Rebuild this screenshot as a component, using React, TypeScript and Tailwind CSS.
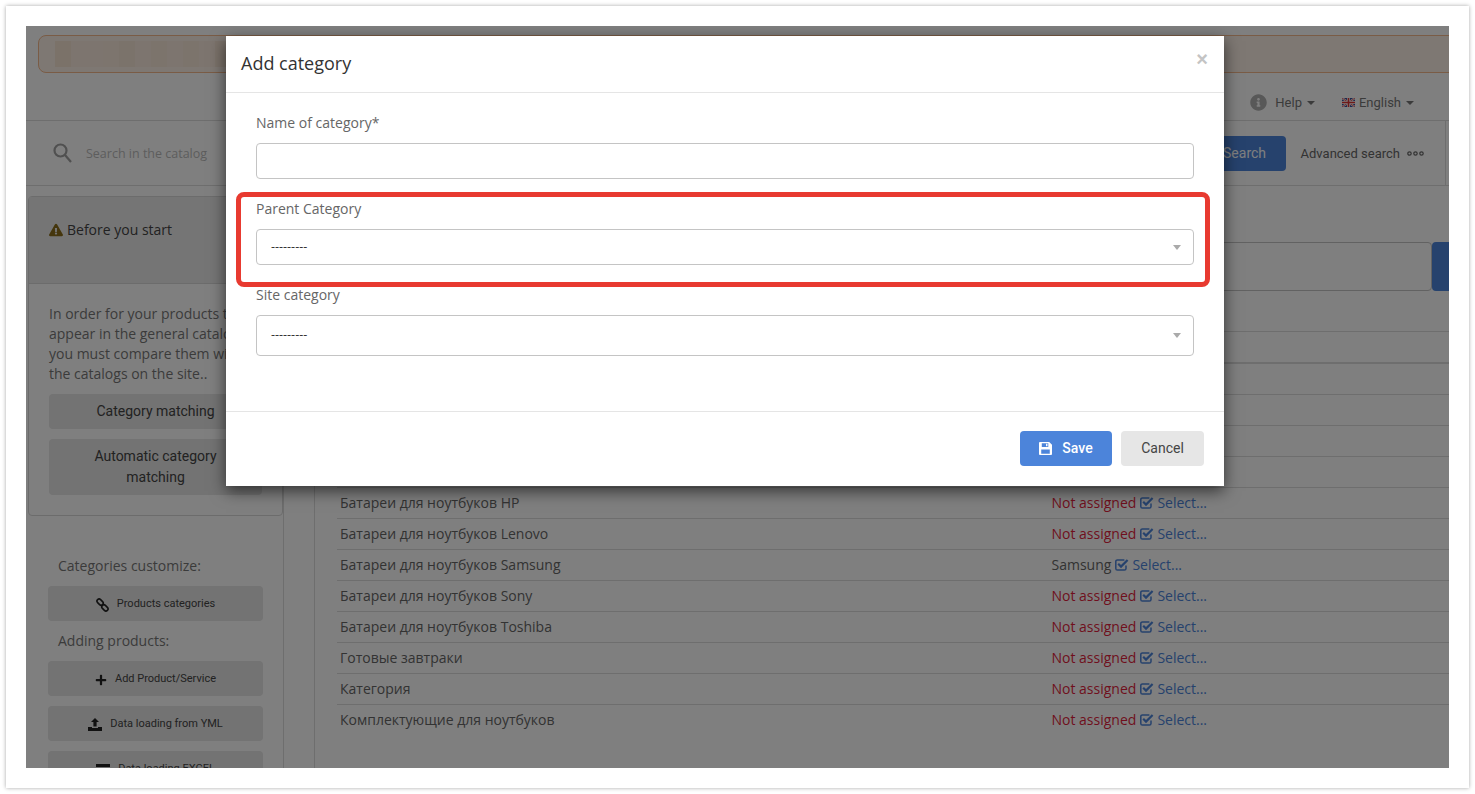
import React from "react";
import { FaExclamationTriangle, FaInfoCircle, FaPlus } from "react-icons/fa";

const rows: [string, string][] = [
  ["Батареи для ноутбуков HP", "Not assigned"],
  ["Батареи для ноутбуков Lenovo", "Not assigned"],
  ["Батареи для ноутбуков Samsung", "Samsung"],
  ["Батареи для ноутбуков Sony", "Not assigned"],
  ["Батареи для ноутбуков Toshiba", "Not assigned"],
  ["Готовые завтраки", "Not assigned"],
  ["Категория", "Not assigned"],
  ["Комплектующие для ноутбуков", "Not assigned"],
];

const blocks = ["#f6e4d2", "#fbebdf", "#fbebdf", "#faeadc", "#f7e6d6", "#fbebdf", "#f8e8d8", "#fbebdf", "#f8e8d8", "#fbebdf", "#f6e5d4"];

function Caret({ className }: { className: string }) {
  return <span className={"inline-block border-x-[4px] border-t-[4px] border-x-transparent " + className} />;
}

function SelectBox({ h, lift = "" }: { h: string; lift?: string }) {
  return (
    <div className={"flex items-center justify-between rounded-[4px] border border-[#c4c4c4] bg-white pl-[14px] pr-[12px] text-[12.5px] text-[#333] " + h}>
      <span className={lift}>---------</span>
      <span className="inline-block border-x-[4.5px] border-t-[5px] border-x-transparent border-t-[#aaa]" />
    </div>
  );
}

function SearchIcon() {
  return (
    <svg width="19" height="20" viewBox="0 0 19 20" className="shrink-0 text-[#a0a0a0]" fill="none" stroke="currentColor" strokeWidth="2.2">
      <circle cx="7.5" cy="7.5" r="6" />
      <path d="M12 12l6 7" />
    </svg>
  );
}

function UploadIcon() {
  return (
    <svg width="14" height="13" viewBox="0 0 14 13" className="shrink-0 text-[#222]" fill="currentColor">
      <path d="M7 0l4 4H8.6v4.4H5.4V4H3z" />
      <path d="M0 9h4v1h6V9h4v4H0z" />
    </svg>
  );
}

function ListIcon() {
  return (
    <svg width="14" height="12" viewBox="0 0 14 12" className="shrink-0 text-[#222]" fill="currentColor">
      <path d="M0 0h14v3H0zM0 4.5h14v1.5H0zM0 8h14v1.5H0z" />
    </svg>
  );
}

function ChainIcon() {
  return (
    <svg width="13" height="14" viewBox="0 0 13 14" className="shrink-0 text-[#222]" fill="none" stroke="currentColor" strokeWidth="1.6">
      <rect x="0.6" y="2" width="7" height="4.2" rx="2.1" transform="rotate(45 4.1 4.1)" />
      <rect x="5.4" y="7.8" width="7" height="4.2" rx="2.1" transform="rotate(45 8.9 9.9)" />
    </svg>
  );
}

function CheckIcon() {
  return (
    <svg width="14" height="13" viewBox="0 0 14 13" className="shrink-0 text-[#4c84da]" fill="none" stroke="currentColor">
      <path d="M11 7.5v3a1.6 1.6 0 0 1-1.6 1.6H2.4A1.6 1.6 0 0 1 .8 10.5V3.5a1.6 1.6 0 0 1 1.6-1.6h7" strokeWidth="1.5" />
      <path d="M3.2 5.8l2.8 2.8 6.6-6.6" strokeWidth="2.2" />
    </svg>
  );
}

function SaveIcon() {
  return (
    <svg width="13" height="13" viewBox="0 0 14 14" className="shrink-0" fill="#fff">
      <path
        fillRule="evenodd"
        d="M1 0h10l3 3v10a1 1 0 0 1-1 1H1a1 1 0 0 1-1-1V1a1 1 0 0 1 1-1zM3 1.3v4h7v-4zM2.4 8v4.7h9.2V8z"
      />
      <path d="M7.6 1.9h1.5v2.8H7.6z" />
    </svg>
  );
}

function SideButton({ icon, label }: { icon: React.ReactNode; label: string }) {
  return (
    <div className="mt-[10px] ml-[22px] flex h-[35px] w-[215px] shrink-0 items-center justify-center gap-[8px] rounded-[4px] bg-[#e6e6e6] pt-[2px] font-['Roboto',sans-serif] text-[11px] text-[#444]">
      {icon}
      <span>{label}</span>
    </div>
  );
}

function Flag() {
  return (
    <svg width="13" height="9" viewBox="0 0 13 9" className="shrink-0">
      <rect width="13" height="9" fill="#3b4f9a" />
      <path d="M0 0l13 9M13 0L0 9" stroke="#fff" strokeWidth="2" />
      <path d="M0 0l13 9M13 0L0 9" stroke="#d33" strokeWidth="0.8" />
      <path d="M6.5 0v9M0 4.5h13" stroke="#fff" strokeWidth="3" />
      <path d="M6.5 0v9M0 4.5h13" stroke="#d33" strokeWidth="1.6" />
    </svg>
  );
}

export default function App() {
  return (
    <div className="h-[794px] w-[1475px] overflow-hidden bg-white p-[6px] font-['Open_Sans',sans-serif]">
      <div className="h-[782px] w-[1463px] bg-white p-[20px] shadow-[0_0_4px_rgba(0,0,0,0.35)]">
        <div className="relative h-[742px] w-[1423px] overflow-hidden bg-white">
          {/* top */}
          <div className="h-[95px] border-b border-[#dcdcdc] pl-[12px] pt-[9px]">
            <div className="flex h-[38px] w-[1500px] items-center rounded-[8px] border border-[#f4b88c] bg-[#fdf0e6] pl-[16px]">
              <div className="flex h-[26px]">
                {blocks.map((c, i) => (
                  <div key={i} className="h-full w-[16px]" style={{ backgroundColor: c }} />
                ))}
              </div>
            </div>
            <div className="mt-[20px] flex items-center justify-end pr-[35px] font-['Roboto',sans-serif] text-[13px] text-[#777]">
              <FaInfoCircle className="mr-[8px] text-[17px] text-[#b0b0b0]" />
              <span>Help</span>
              <Caret className="ml-[5px] border-t-[#777]" />
              <span className="ml-[27px]"><Flag /></span>
              <span className="ml-[4px]">English</span>
              <Caret className="ml-[5px] border-t-[#777]" />
            </div>
          </div>
          {/* search bar */}
          <div className="flex h-[65px] items-center border-b border-[#dcdcdc] pr-[3px]">
            <div className="flex h-full flex-1 items-center border-r border-[#dcdcdc] pl-[27px] pr-[21px]">
              <SearchIcon />
              <span className="ml-[14px] mt-[2px] text-[12.5px] text-[#bbb]">Search in the catalog</span>
              <div className="ml-auto flex h-[35px] w-[86px] items-center justify-center rounded-[4px] bg-[#4c84da] pl-[4px] font-['Roboto',sans-serif] text-[14px] text-white">
                Search
              </div>
              <span className="ml-[15px] mt-[2px] font-['Roboto',sans-serif] text-[13px] text-[#666]">Advanced search</span>
              <svg width="17" height="5" viewBox="0 0 17 5" className="ml-[7px] text-[#666]" fill="none" stroke="currentColor" strokeWidth="1.2">
                <circle cx="2.5" cy="2.5" r="1.7" />
                <circle cx="8.5" cy="2.5" r="1.7" />
                <circle cx="14.5" cy="2.5" r="1.7" />
              </svg>
            </div>
          </div>
          {/* main */}
          <div className="flex h-[582px]">
            <aside className="flex h-full w-[258px] shrink-0 flex-col border-r border-[#dcdcdc]">
              <div className="ml-[2px] mt-[10px] h-[320px] w-[255px] shrink-0 rounded-[4px] border border-[#d8d8d8]">
                <div className="h-[87px] border-b border-[#d8d8d8] bg-[#ebebeb] pl-[20px] pt-[23px]">
                  <div className="flex items-center gap-[4px] text-[14px] leading-[20px] text-[#444]">
                    <FaExclamationTriangle className="text-[14px] text-[#8a6d1a]" />
                    <span>Before you start</span>
                  </div>
                </div>
                <div className="px-[20px] pt-[20px]">
                  <p className="text-[14px] leading-[20px] text-[#777]">
                    In order for your products to appear in the general catalog you must compare them with the catalogs on the site..
                  </p>
                  <div className="mt-[10px] flex h-[35px] items-center justify-center rounded-[4px] bg-[#e6e6e6] font-['Roboto',sans-serif] text-[14px] text-[#444]">
                    Category matching
                  </div>
                  <div className="mt-[10px] flex h-[56px] items-center justify-center rounded-[4px] bg-[#e6e6e6] px-[30px] text-center font-['Roboto',sans-serif] text-[14px] leading-[21px] text-[#444]">
                    Automatic category matching
                  </div>
                </div>
              </div>
              <div className="ml-[32px] mt-[40px] text-[14px] leading-[20px] text-[#777]">Categories customize:</div>
              <SideButton icon={<ChainIcon />} label="Products categories" />
              <div className="ml-[32px] mt-[10px] text-[14px] leading-[20px] text-[#777]">Adding products:</div>
              <SideButton icon={<FaPlus className="text-[12px] text-[#222]" />} label="Add Product/Service" />
              <SideButton icon={<UploadIcon />} label="Data loading from YML" />
              <SideButton icon={<ListIcon />} label="Data loading EXCEL" />
            </aside>
            <div className="h-full w-[31px] shrink-0 border-r border-[#dcdcdc]" />
            <main className="flex-1 pl-[22px]">
              <div className="mt-[56px] flex h-[49px] w-[1130px]">
                <div className="w-[1095px] rounded-[4px] border border-[#c4c4c4]" />
                <div className="flex-1 rounded-l-[4px] bg-[#4c84da]" />
              </div>
              <div className="mt-[40px] w-[1130px]">
                <div className="h-[31px] border-t border-[#dcdcdc]" />
                <div className="h-[32px] border-t-2 border-[#dcdcdc]" />
                <div className="h-[31px] border-t border-[#dcdcdc]" />
                <div className="h-[31px] border-t border-[#dcdcdc]" />
                <div className="h-[31px] border-t border-[#dcdcdc]" />
                {rows.map(([name, value]) => (
                  <div key={name} className="flex h-[31px] items-center border-t border-[#dcdcdc] pb-[2px] pl-[3px] text-[14px] text-[#666]">
                    <span className="w-[711.5px] shrink-0">{name}</span>
                    <span className={value === "Samsung" ? "text-[#666]" : "text-[#e01f3d]"}>{value}</span>
                    <span className="ml-[4px]"><CheckIcon /></span>
                    <span className="ml-[3px] text-[#4c84da]">Select...</span>
                  </div>
                ))}
              </div>
            </main>
          </div>
          {/* dim layer and dialog */}
          <div className="absolute inset-0 bg-black/50 pl-[200px] pt-[10px]">
            <div className="relative h-[450px] w-[998px] bg-white shadow-[0_5px_15px_rgba(0,0,0,0.6)]">
              <div className="flex h-[57px] items-center justify-between border-b border-[#e5e5e5] pb-[2px] pl-[15px] pr-[16px]">
                <span className="text-[18px] text-[#333]">Add category</span>
                <span className="mb-[8px] font-['Liberation_Sans',sans-serif] text-[20px] font-bold leading-none text-[#c4c4c4]">×</span>
              </div>
              <div className="h-[319px] border-b border-[#e5e5e5] pl-[30px] pr-[30px] pt-[20px] text-[14px] leading-[20px] text-[#666]">
                <div>Name of category*</div>
                <input className="mt-[10px] block h-[36px] w-full rounded-[4px] border border-[#c4c4c4] bg-white" />
                <div className="mt-[20px]">Parent Category</div>
                <div className="mt-[10px]"><SelectBox h="h-[36px]" /></div>
                <div className="mt-[20px]">Site category</div>
                <div className="mt-[10px]"><SelectBox h="h-[41px]" lift="mb-[2px]" /></div>
              </div>
              <div className="flex justify-end gap-[9px] pr-[20px] pt-[19px] font-['Roboto',sans-serif] text-[14px]">
                <div className="flex h-[35px] w-[92px] items-center justify-center gap-[10px] rounded-[4px] bg-[#4c84da] font-medium text-white">
                  <SaveIcon />
                  <span>Save</span>
                </div>
                <div className="flex h-[35px] w-[83px] items-center justify-center rounded-[4px] bg-[#e6e6e6] text-[#444]">Cancel</div>
              </div>
              <div className="absolute left-[10px] top-[156px] h-[95px] w-[974px] rounded-[8px] border-[5px] border-[#e83a30]" />
            </div>
          </div>
        </div>
      </div>
    </div>
  );
}
